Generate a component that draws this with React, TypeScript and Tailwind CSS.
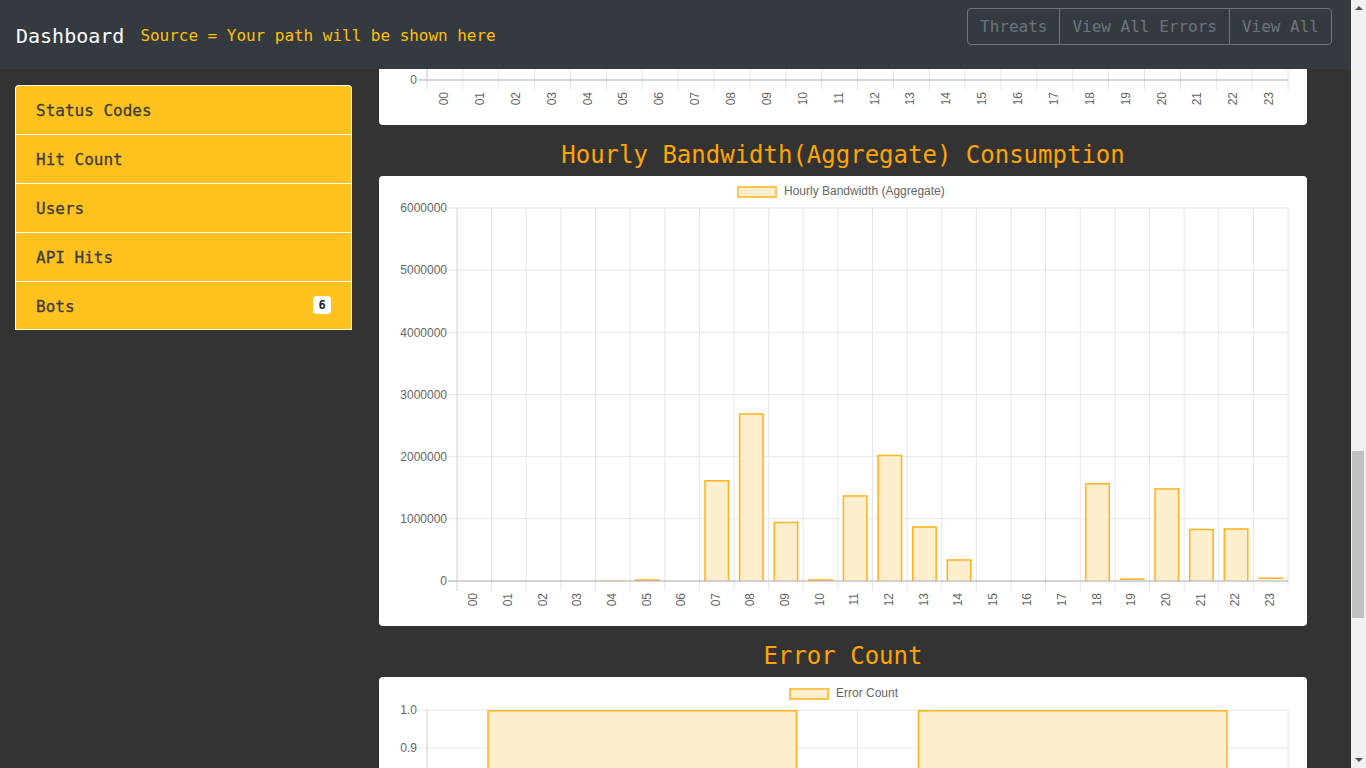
import React from "react";

const HOURS = Array.from({ length: 24 }, (_, i) => String(i).padStart(2, "0"));

// bytes per hour, read off the bandwidth chart
const BANDWIDTH = [
  0, 0, 0, 0, 5000, 16000, 0, 1625000, 2700000, 955000, 16000, 1380000,
  2030000, 880000, 350000, 0, 0, 0, 1575000, 30000, 1490000, 840000, 850000,
  45000,
];

const NAV_ITEMS = ["Status Codes", "Hit Count", "Users", "API Hits", "Bots"];

const GRID = "#e6e6e6";
const ZERO = "#a9a9a9";
const AXIS = "#cfcfcf";
const TICK = "#666";
const BAR_FILL = "#fdeecd";
const BAR_STROKE = "#ffb21e";

function BarRect({ x, y, w, h }: { x: number; y: number; w: number; h: number }) {
  if (h <= 0) return null;
  if (h < 3) {
    return <line x1={x} x2={x + w} y1={y} y2={y} stroke={h < 0.5 ? "#ffe3a8" : BAR_STROKE} strokeWidth={1.5} />;
  }
  return (
    <g>
      <rect x={x} y={y} width={w} height={h} fill={BAR_FILL} />
      <path
        d={`M${x + 0.75} ${y + h} V${y + 0.75} H${x + w - 0.75} V${y + h}`}
        fill="none"
        stroke={BAR_STROKE}
        strokeWidth={1.5}
      />
    </g>
  );
}

function Legend({ x, y, label }: { x: number; y: number; label: string }) {
  return (
    <g>
      <rect x={x + 1} y={y + 1} width={38} height={10} fill={BAR_FILL} stroke="#ffc24f" strokeWidth={2} />
      <text x={x + 47} y={y + 6} dominantBaseline="middle" fontSize={12} fill={TICK}>
        {label}
      </text>
    </g>
  );
}

function HourLabels({ left, catW, y }: { left: number; catW: number; y: number }) {
  return (
    <g>
      {HOURS.map((h, i) => {
        const cx = left + catW * (i + 0.5);
        return (
          <text
            key={h}
            transform={`translate(${cx} ${y}) rotate(-90)`}
            textAnchor="end"
            dominantBaseline="middle"
            fontSize={12}
            fill={TICK}
          >
            {h}
          </text>
        );
      })}
    </g>
  );
}

function StubChart() {
  const left = 48;
  const right = 909;
  const axisY = 11;
  const catW = (right - left) / 24;
  return (
    <svg width={928} height={56} className="block font-['Liberation_Sans',sans-serif]">
      {Array.from({ length: 25 }, (_, i) => (
        <line key={i} x1={left + i * catW} x2={left + i * catW} y1={0} y2={axisY + 10} stroke={GRID} />
      ))}
      <line x1={left - 9} x2={right} y1={axisY} y2={axisY} stroke={ZERO} />
      <line x1={left} x2={left} y1={0} y2={axisY} stroke={AXIS} />
      <text x={left - 10} y={axisY + 1} textAnchor="end" dominantBaseline="middle" fontSize={12} fill={TICK}>
        0
      </text>
      <HourLabels left={left} catW={catW} y={axisY + 12} />
    </svg>
  );
}

function BandwidthChart() {
  const left = 78;
  const right = 909;
  const top = 32;
  const bottom = 405;
  const catW = (right - left) / 24;
  const perUnit = (bottom - top) / 6000000;
  const barW = catW * 0.72;
  return (
    <svg width={928} height={448} className="block font-['Liberation_Sans',sans-serif]">
      <Legend x={358} y={10} label="Hourly Bandwidth (Aggregate)" />
      {[1, 2, 3, 4, 5, 6].map((m) => {
        const y = bottom - m * 1000000 * perUnit;
        return <line key={m} x1={left - 9} x2={right} y1={y} y2={y} stroke={GRID} />;
      })}
      {Array.from({ length: 25 }, (_, i) => (
        <line key={i} x1={left + i * catW} x2={left + i * catW} y1={top} y2={bottom + 10} stroke={i === 0 ? AXIS : GRID} />
      ))}
      {[0, 1, 2, 3, 4, 5, 6].map((m) => (
        <text
          key={m}
          x={left - 10}
          y={bottom - m * 1000000 * perUnit + 1}
          textAnchor="end"
          dominantBaseline="middle"
          fontSize={12}
          fill={TICK}
        >
          {m === 0 ? "0" : `${m}000000`}
        </text>
      ))}
      {BANDWIDTH.map((v, i) => {
        const h = v * perUnit;
        const x = left + catW * (i + 0.5) - barW / 2;
        return <BarRect key={i} x={x} y={bottom - h} w={barW} h={h} />;
      })}
      <line x1={left - 9} x2={right} y1={bottom} y2={bottom} stroke={ZERO} />
      <HourLabels left={left} catW={catW} y={bottom + 12} />
    </svg>
  );
}

function ErrorChart() {
  const left = 48;
  const right = 909;
  const top = 33;
  const step = 38; // px per 0.1
  const catW = (right - left) / 2;
  const barW = catW * 0.72;
  return (
    <svg width={928} height={91} className="block font-['Liberation_Sans',sans-serif]">
      <Legend x={410} y={11} label="Error Count" />
      {[0, 1, 2].map((k) => (
        <line key={k} x1={left - 9} x2={right} y1={top + k * step} y2={top + k * step} stroke={GRID} />
      ))}
      {[0, 1, 2].map((i) => (
        <line key={i} x1={left + i * catW} x2={left + i * catW} y1={top} y2={91} stroke={i === 0 ? AXIS : GRID} />
      ))}
      {["1.0", "0.9"].map((t, k) => (
        <text key={t} x={left - 10} y={top + k * step + 1} textAnchor="end" dominantBaseline="middle" fontSize={12} fill={TICK}>
          {t}
        </text>
      ))}
      {[0, 1].map((i) => (
        <BarRect key={i} x={left + catW * (i + 0.5) - barW / 2} y={top} w={barW} h={200} />
      ))}
    </svg>
  );
}

function Navbar() {
  return (
    <nav className="flex h-[69px] shrink-0 items-center bg-[#343a40] pl-4 pr-[19px]">
      <span className="pt-[2px] text-[20px] leading-[30px] text-white">Dashboard</span>
      <span className="ml-[16px] pt-[2px] text-base tracking-[-0.03px] text-[#ffc107]">Source = Your path will be shown here</span>
      <div className="ml-auto mt-2 flex self-start">
        {["Threats", "View All Errors", "View All"].map((label, i) => (
          <button
            key={label}
            className={
              "h-[37px] border border-[#6c757d] px-3 text-base text-[#6c757d] " +
              (i === 0 ? "rounded-l" : "-ml-px") +
              (i === 2 ? " rounded-r" : "")
            }
          >
            {label}
          </button>
        ))}
      </div>
    </nav>
  );
}

function Sidebar() {
  return (
    <aside className="w-[352px] shrink-0 pl-[15px] pt-4">
      <ul>
        {NAV_ITEMS.map((item, i) => (
          <li
            key={item}
            className={
              "flex h-[49px] items-center border-x border-t border-white bg-[#ffc21f] px-5 pt-[2px] text-base text-[#3d3d3d] [-webkit-text-stroke:0.3px_#3d3d3d] " +
              (i === 0 ? "rounded-t" : "") +
              (i === NAV_ITEMS.length - 1 ? " border-b" : "")
            }
          >
            <span>{item}</span>
            {item === "Bots" && (
              <span className="-mt-[4px] ml-auto flex h-[18px] w-[18px] items-center justify-center rounded bg-white text-xs font-bold text-[#212529] [-webkit-text-stroke:0]">
                6
              </span>
            )}
          </li>
        ))}
      </ul>
    </aside>
  );
}

function SectionTitle({ children }: { children: React.ReactNode }) {
  return (
    <h2 className="pb-[6px] pt-4 text-center text-[24px] leading-[29px] text-[#ffa500]">{children}</h2>
  );
}

function Scrollbar() {
  return (
    <div className="relative w-[15px] shrink-0 bg-[#f1f1f1]">
      <div className="absolute left-[4px] top-[6px] h-0 w-0 border-x-[4px] border-b-[4px] border-x-transparent border-b-[#505050]" />
      <div className="absolute left-[1px] top-[451px] h-[167px] w-[12px] bg-[#c1c1c1]" />
      <div className="absolute bottom-[6px] left-[4px] h-0 w-0 border-x-[4px] border-t-[4px] border-x-transparent border-t-[#505050]" />
    </div>
  );
}

export default function App() {
  return (
    <div className="flex h-screen overflow-hidden bg-[#333] font-['DejaVu_Sans_Mono',monospace]">
      <div className="flex min-w-0 flex-1 flex-col">
        <Navbar />
        <div className="flex flex-1 overflow-hidden">
          <Sidebar />
          <main className="ml-[27px] w-[928px] shrink-0">
            <div className="h-[56px] overflow-hidden rounded-b bg-white">
              <StubChart />
            </div>
            <SectionTitle>Hourly Bandwidth(Aggregate) Consumption</SectionTitle>
            <div className="h-[450px] overflow-hidden rounded bg-white">
              <BandwidthChart />
            </div>
            <SectionTitle>Error Count</SectionTitle>
            <div className="h-[91px] overflow-hidden rounded-t bg-white">
              <ErrorChart />
            </div>
          </main>
        </div>
      </div>
      <Scrollbar />
    </div>
  );
}
